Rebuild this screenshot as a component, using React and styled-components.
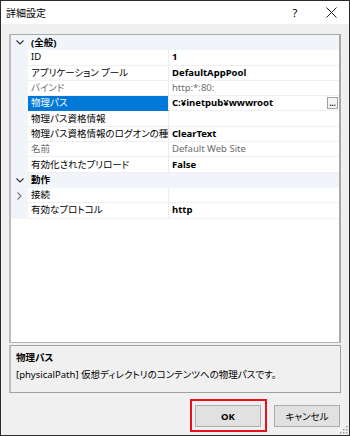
import React from 'react';
import styled, { createGlobalStyle } from 'styled-components';

const GlobalStyle = createGlobalStyle`
  html, body {
    margin: 0;
    padding: 0;
    background: #ffffff;
  }
  * {
    box-sizing: border-box;
  }
`;

const Window = styled.div`
  width: 350px;
  height: 436px;
  border: 1px solid #2b2b2b;
  background: #f0f0f0;
  display: flex;
  flex-direction: column;
  position: relative;
  font-family: "Noto Sans", "Noto Sans CJK JP", sans-serif;
  font-feature-settings: "palt";
  font-size: 9.5px;
  color: #000;
`;

const TitleBar = styled.div`
  height: 23px;
  background: #ffffff;
  display: flex;
  align-items: center;
  padding-left: 5px;
`;

const Title = styled.div`
  flex: 1;
  font-size: 10px;
`;

const TitleButton = styled.div`
  width: 36px;
  height: 23px;
  display: flex;
  align-items: center;
  justify-content: center;
  font-size: 11px;
`;

const Body = styled.div`
  flex: 1;
  display: flex;
  flex-direction: column;
  padding: 10px 8px 0 8px;
`;

const Grid = styled.div`
  height: 309px;
  background: #ffffff;
  border-top: 1px solid #a8a8a8;
  border-bottom: 1px solid #b4b4b4;
  border-left: 2px solid #bcbcbc;
  border-right: 2px solid #a8a8a8;
  display: flex;
  flex-direction: column;
`;

const Row = styled.div`
  height: 15.3px;
  display: grid;
  grid-template-columns: 17px 141px 1fr;
  line-height: 14px;
  background: ${p => (p.$category ? '#f1f4f9' : '#ffffff')};
`;

const Gutter = styled.div`
  background: #f1f4f9;
  display: flex;
  align-items: center;
  justify-content: center;
`;

const CategoryLabel = styled.div`
  grid-column: 2 / 4;
  padding-left: 3px;
  font-weight: bold;
  display: flex;
  align-items: center;
`;

const NameCell = styled.div`
  padding-left: 3px;
  white-space: nowrap;
  overflow: hidden;
  border-bottom: 1px solid ${p => (p.$selected ? '#0078d7' : '#f0f0f0')};
  border-right: 1px solid #ececec;
  background: ${p => (p.$selected ? '#0078d7' : 'transparent')};
  color: ${p => (p.$selected ? '#ffffff' : p.$disabled ? '#6d6d6d' : '#000')};
  display: flex;
  align-items: center;
`;

const ValueCell = styled.div`
  padding-left: 3px;
  white-space: nowrap;
  border-bottom: 1px solid #f0f0f0;
  display: flex;
  align-items: center;
  font-weight: ${p => (p.$disabled ? 'normal' : 'bold')};
  color: ${p => (p.$disabled ? '#6d6d6d' : '#000')};
`;

const ValueText = styled.span`
  flex: 1;
`;

const EllipsisButton = styled.div`
  width: 11px;
  height: 12px;
  margin-right: 1px;
  border: 1px solid #a0a0a0;
  background: #f4f4f4;
  font-size: 8px;
  font-weight: bold;
  line-height: 10px;
  text-align: center;
  color: #222;
`;

const Description = styled.div`
  height: 48px;
  margin-top: 2px;
  border: 1px solid #a0a0a0;
  border-left: 2px solid #bcbcbc;
  background: #f0f0f0;
  padding: 3px 5px;
  line-height: 17px;
`;

const DescTitle = styled.div`
  font-weight: bold;
`;

const ButtonRow = styled.div`
  display: flex;
  justify-content: flex-end;
  align-items: center;
  gap: 7px;
  padding: 6px 1px 0 0;
`;

const Highlight = styled.div`
  border: 2px solid #e8111b;
  padding: 4px 4px 3px 3px;
`;

const Button = styled.div`
  width: 66px;
  height: 22px;
  background: #e1e1e1;
  border: 1px solid #adadad;
  display: flex;
  align-items: center;
  justify-content: center;
  font-weight: ${p => (p.$bold ? 'bold' : 'normal')};
`;

const Grip = styled.svg`
  position: absolute;
  right: 1px;
  bottom: 1px;
`;

const ChevronDown = () => (
  <svg width="8" height="5" viewBox="0 0 8 5">
    <path d="M0.5 0.5 L4 4 L7.5 0.5" fill="none" stroke="#333" strokeWidth="1.2" />
  </svg>
);

const ChevronRight = () => (
  <svg width="5" height="8" viewBox="0 0 5 8">
    <path d="M0.5 0.5 L4 4 L0.5 7.5" fill="none" stroke="#777" strokeWidth="1.1" />
  </svg>
);

const rows = [
  { category: '(全般)' },
  { name: 'ID', value: '1' },
  { name: 'アプリケーション プール', value: 'DefaultAppPool' },
  { name: 'バインド', value: 'http:*:80:', disabled: true },
  { name: '物理パス', value: 'C:¥inetpub¥wwwroot', selected: true, button: true },
  { name: '物理パス資格情報', value: '' },
  { name: '物理パス資格情報のログオンの種類', value: 'ClearText' },
  { name: '名前', value: 'Default Web Site', disabled: true },
  { name: '有効化されたプリロード', value: 'False' },
  { category: '動作' },
  { name: '接続', value: '', collapsed: true },
  { name: '有効なプロトコル', value: 'http' },
];

export default function App() {
  return (
    <>
      <GlobalStyle />
      <Window>
        <TitleBar>
          <Title>詳細設定</Title>
          <TitleButton>?</TitleButton>
          <TitleButton>
            <svg width="11" height="11" viewBox="0 0 11 11">
              <path d="M0.5 0.5 L10.5 10.5 M10.5 0.5 L0.5 10.5" stroke="#222" strokeWidth="1" />
            </svg>
          </TitleButton>
        </TitleBar>
        <Body>
          <Grid>
            {rows.map((r, i) =>
              r.category ? (
                <Row key={i} $category>
                  <Gutter>
                    <ChevronDown />
                  </Gutter>
                  <CategoryLabel>{r.category}</CategoryLabel>
                </Row>
              ) : (
                <Row key={i}>
                  <Gutter>{r.collapsed && <ChevronRight />}</Gutter>
                  <NameCell $selected={r.selected} $disabled={r.disabled}>
                    {r.name}
                  </NameCell>
                  <ValueCell $disabled={r.disabled}>
                    <ValueText>{r.value}</ValueText>
                    {r.button && <EllipsisButton>...</EllipsisButton>}
                  </ValueCell>
                </Row>
              )
            )}
          </Grid>
          <Description>
            <DescTitle>物理パス</DescTitle>
            <div>[physicalPath] 仮想ディレクトリのコンテンツへの物理パスです。</div>
          </Description>
          <ButtonRow>
            <Highlight>
              <Button $bold>OK</Button>
            </Highlight>
            <Button>キャンセル</Button>
          </ButtonRow>
        </Body>
        <Grip width="8" height="8" viewBox="0 0 8 8">
          <g fill="#9a9a9a">
            <rect x="6" y="0" width="1.5" height="1.5" />
            <rect x="3" y="3" width="1.5" height="1.5" />
            <rect x="6" y="3" width="1.5" height="1.5" />
            <rect x="0" y="6" width="1.5" height="1.5" />
            <rect x="3" y="6" width="1.5" height="1.5" />
            <rect x="6" y="6" width="1.5" height="1.5" />
          </g>
        </Grip>
      </Window>
    </>
  );
}
